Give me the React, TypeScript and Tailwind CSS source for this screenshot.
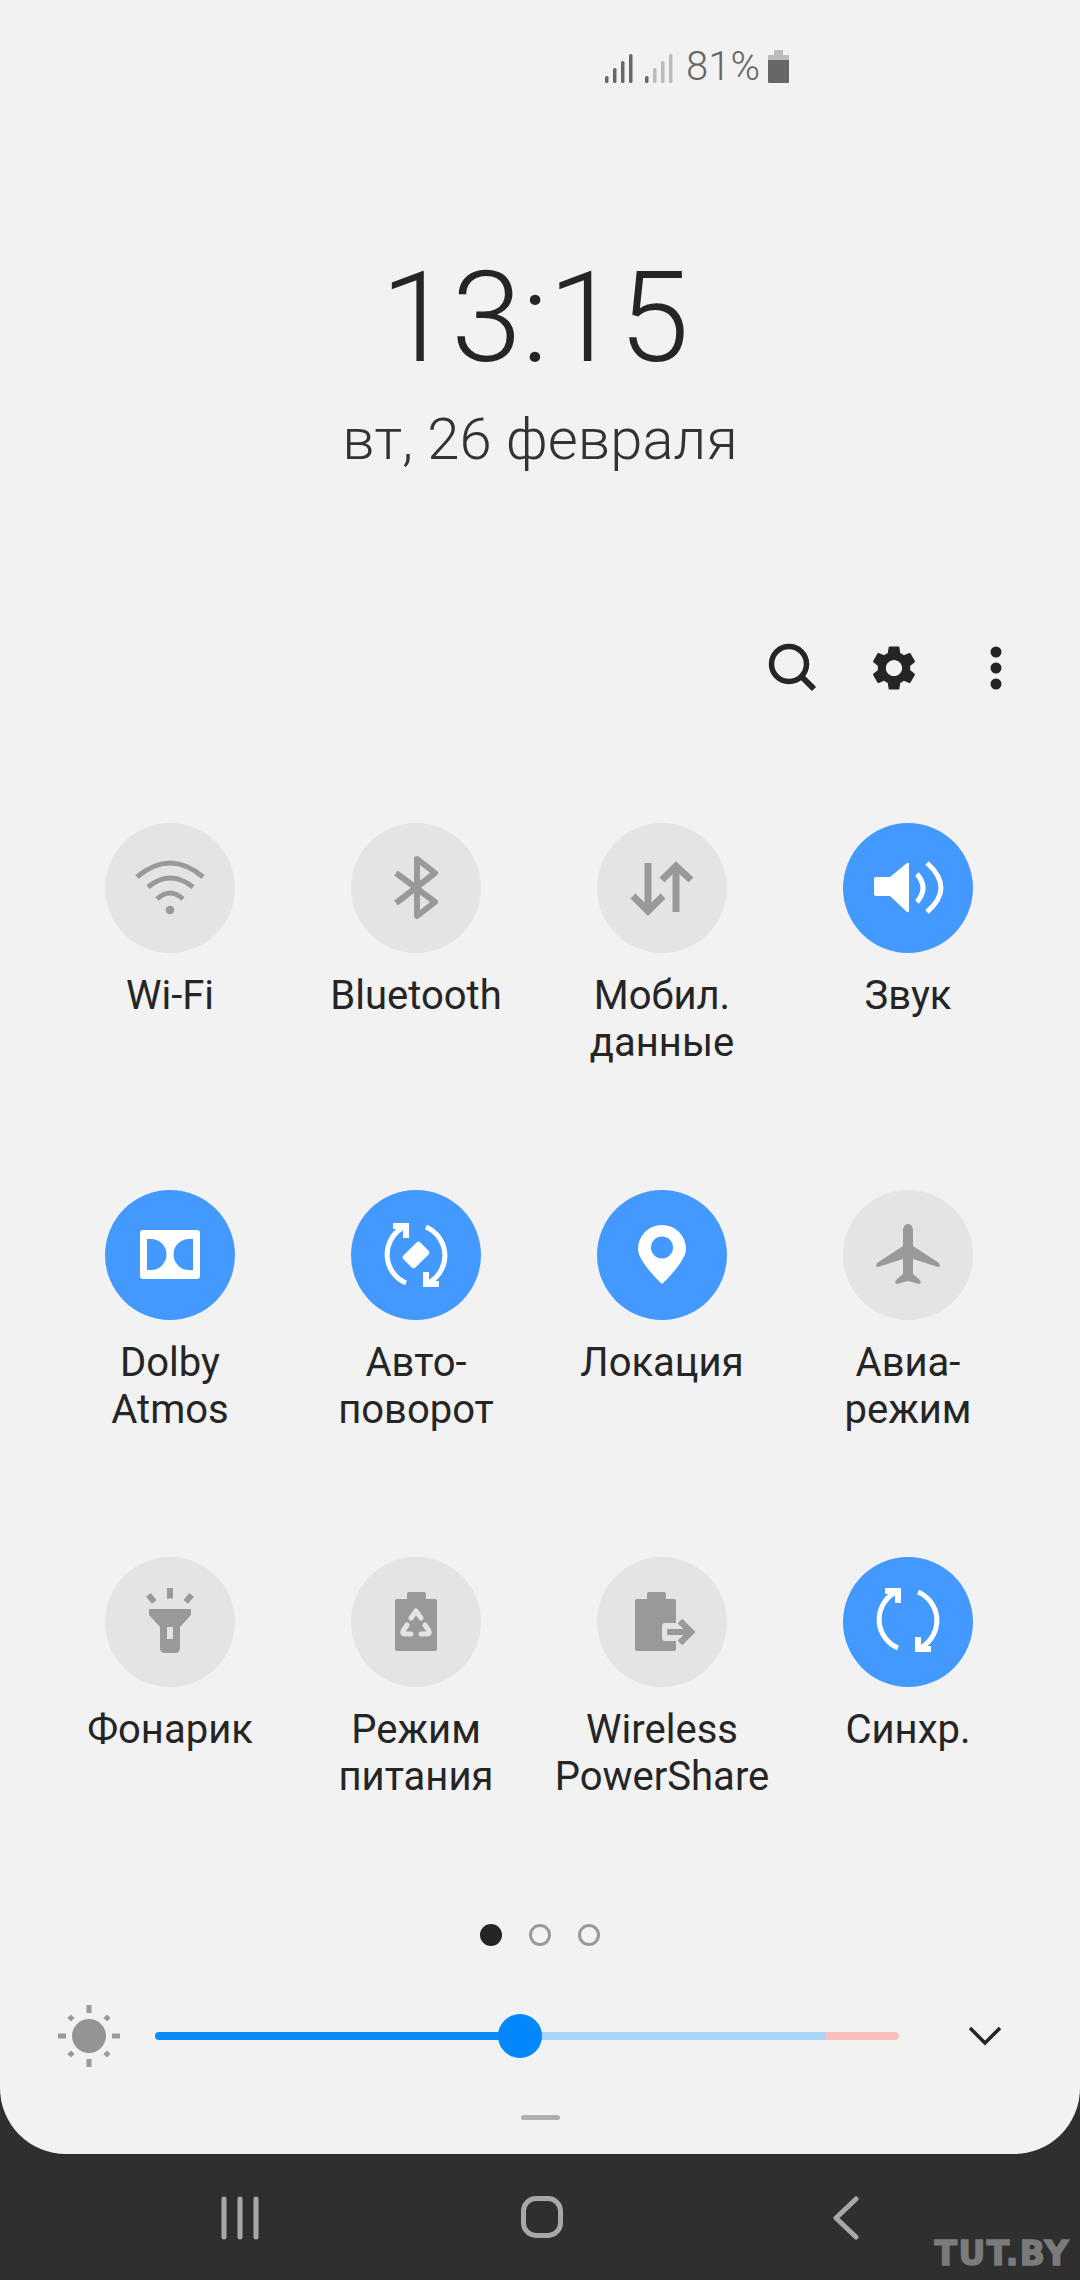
const font = { fontFamily: "Roboto, sans-serif" };

const WifiIcon = () => (
    <g fill="none" stroke="currentColor" strokeWidth="5">
        <path d="M32 54 Q65 26 98 54" />
        <path d="M43 64 Q65 46 88 64" />
        <path d="M52 76 Q65 64 78 76" />
        <circle cx="65" cy="87" r="4.3" fill="currentColor" stroke="none" />
    </g>
);

const BluetoothIcon = () => (
    <path d="M45 50 L84 79 L66 93 V36 L84 50 L45 80" fill="none" stroke="currentColor" strokeWidth="6" strokeLinejoin="round" />
);

const DataIcon = () => (
    <g fill="none" stroke="currentColor" strokeWidth="7">
        <path d="M51 40 V86" />
        <path d="M36 73 L51 88 L66 73" />
        <path d="M79 89 V44" />
        <path d="M65 57 L79 43 L94 57" />
    </g>
);

const SoundIcon = () => (
    <g>
        <path d="M33 54 H47 L64 40 Q66 39 66 41 V88 Q66 90 64 89 L47 73 H33 Q31 73 31 71 V56 Q31 54 33 54Z" fill="currentColor" />
        <path d="M74 51 Q86 65 74 79" fill="none" stroke="currentColor" strokeWidth="5" />
        <path d="M84 40 Q112 65 84 89" fill="none" stroke="currentColor" strokeWidth="5" />
    </g>
);

const DolbyIcon = () => (
    <g>
        <rect x="35" y="40" width="60" height="49" rx="3" fill="currentColor" />
        <path d="M42 49 H46 A15.5 15.5 0 0 1 46 80 H42Z" className="fill-[#4499ff]" />
        <path d="M88 49 H84 A15.5 15.5 0 0 0 84 80 H88Z" className="fill-[#4499ff]" />
    </g>
);

const SyncArcs = ({ dy = 0 }: { dy?: number }) => (
    <g fill="none" stroke="currentColor" strokeWidth="5" transform={`translate(0 ${dy})`}>
        <path d="M55 93 A31 31 0 0 1 51 38" />
        <path d="M42 36 H55 V48" strokeWidth="6" />
        <path d="M75 37 A31 31 0 0 1 79 92" />
        <path d="M88 94 H75 V82" strokeWidth="6" />
    </g>
);

const RotateIcon = () => (
    <g>
        <SyncArcs />
        <rect x="53" y="56.5" width="24" height="17" rx="3" fill="currentColor" transform="rotate(-45 65 65)" />
    </g>
);

const PinIcon = () => (
    <g>
        <path d="M65 94 C65 94 41 72 41 59 A24 24 0 0 1 89 59 C89 72 65 94 65 94Z" fill="currentColor" />
        <circle cx="65" cy="57.5" r="11" className="fill-[#4499ff]" />
    </g>
);

const PlaneIcon = () => (
    <path
        d="M65 34 C60 34 60 40 60 42 V56 L34 73 C33 75 33 77 35 77 L60 69 V84 L53 90 C52 92 52 94 54 94 L65 91 L76 94 C78 94 78 92 77 90 L70 84 V69 L95 77 C97 77 97 75 96 73 L70 56 V42 C70 40 70 34 65 34Z"
        fill="currentColor"
    />
);

const FlashlightIcon = () => (
    <g fill="currentColor">
        <rect x="62" y="31" width="6" height="10.5" />
        <rect x="43" y="37" width="6" height="9" transform="rotate(-40 46 41)" />
        <rect x="81" y="37" width="6" height="9" transform="rotate(40 84 41)" />
        <path
            d="M44 52 H86 V58 L75 70 V91 Q75 96 70 96 H60 Q55 96 55 91 V70 L44 58Z M62 70 V82 H68 V70Z"
            fillRule="evenodd"
        />
    </g>
);

const RecycleIcon = () => (
    <g>
        <rect x="44" y="42" width="42" height="52" rx="2" fill="currentColor" />
        <rect x="56" y="35" width="19" height="8" rx="2" fill="currentColor" />
        <g fill="none" stroke="#e4e4e4" strokeWidth="5" strokeLinecap="round" strokeLinejoin="round">
            <path d="M60 61 L65 54 L70 61" />
            <path d="M56 68 L52 74 Q51 77 54 77 H60" />
            <path d="M74 68 L78 74 Q79 77 76 77 H70" />
        </g>
    </g>
);

const PowerShareIcon = () => (
    <g>
        <rect x="38" y="42" width="41" height="52" rx="2" fill="currentColor" />
        <rect x="50" y="35" width="19" height="8" rx="2" fill="currentColor" />
        <rect x="65" y="66" width="20" height="18" rx="3" fill="#e4e4e4" />
        <path d="M70 75 H94" fill="none" stroke="currentColor" strokeWidth="6" />
        <path d="M83 64 L94 75 L83 86" fill="none" stroke="currentColor" strokeWidth="6.5" />
    </g>
);

const tiles = [
    { label: "Wi-Fi", icon: WifiIcon },
    { label: "Bluetooth", icon: BluetoothIcon },
    { label: "Мобил.\nданные", icon: DataIcon },
    { label: "Звук", icon: SoundIcon, on: true },
    { label: "Dolby\nAtmos", icon: DolbyIcon, on: true },
    { label: "Авто-\nповорот", icon: RotateIcon, on: true },
    { label: "Локация", icon: PinIcon, on: true },
    { label: "Авиа-\nрежим", icon: PlaneIcon },
    { label: "Фонарик", icon: FlashlightIcon },
    { label: "Режим\nпитания", icon: RecycleIcon },
    { label: "Wireless\nPowerShare", icon: PowerShareIcon },
    { label: "Синхр.", icon: () => <SyncArcs dy={-2} />, on: true },
];

const Bars = ({ dim }: { dim: boolean }) => (
    <svg width="30" height="34" viewBox="0 0 30 34">
        {[26, 18, 11, 4].map((y, i) => (
            <rect
                key={y}
                x={i * 8 + 1}
                y={y}
                width="3.5"
                height={33 - y}
                rx="1.5"
                fill={dim && i > 0 ? "#bbbbbb" : "#666666"}
            />
        ))}
    </svg>
);

const Sun = () => (
    <svg width="62" height="62" viewBox="0 0 62 62" fill="#999999">
        <circle cx="31" cy="31" r="17" fill="#949494" />
        <rect x="28.5" y="0" width="5" height="8" />
        <rect x="28.5" y="54" width="5" height="8" />
        <rect x="0" y="28.5" width="8" height="5" />
        <rect x="54" y="28.5" width="8" height="5" />
        <rect x="10.5" y="10.5" width="5" height="5" transform="rotate(45 13 13)" />
        <rect x="46.5" y="10.5" width="5" height="5" transform="rotate(45 49 13)" />
        <rect x="10.5" y="46.5" width="5" height="5" transform="rotate(45 13 49)" />
        <rect x="46.5" y="46.5" width="5" height="5" transform="rotate(45 49 49)" />
    </svg>
);

export default function App() {
    return (
        <div className="relative h-[2280px] w-[1080px] overflow-hidden bg-[#2f2f2f]" style={font}>
            <div className="flex h-[2154px] flex-col rounded-b-[66px] bg-[#f2f2f2]">
                <div className="flex h-[96px] items-start justify-end pr-[290px] pt-[48px]">
                    <div className="flex items-center">
                        <Bars dim={false} />
                        <div className="ml-[10px]"><Bars dim /></div>
                        <span className="ml-[12px] text-[40px] leading-[38px] font-light text-[#666666]">81%</span>
                        <svg className="ml-[8px]" width="22" height="34" viewBox="0 0 22 34">
                            <path d="M6 0 H15 V5 H21 V11 H0 V5 H6Z" fill="#bbbbbb" />
                            <path d="M0 10 H21 V32 Q21 33 20 33 H1 Q0 33 0 32Z" fill="#666666" />
                        </svg>
                    </div>
                </div>

                <div className="mt-[147px] pr-[10px] text-center text-[127px] leading-[150px] font-light text-[#252525]">13:15</div>
                <div className="mt-[16px] text-center text-[58px] leading-[60px] font-light text-[#333333]">вт, 26 февраля</div>

                <div className="mt-[169px] flex h-[60px] items-center justify-end gap-[40px] pr-[54px] text-[#252525]">
                    <svg width="60" height="60" viewBox="0 0 60 60" fill="none" stroke="currentColor">
                        <circle cx="23" cy="26" r="17.5" strokeWidth="5.5" />
                        <path d="M36 39 L48 51" strokeWidth="6" />
                    </svg>
                    <svg width="54" height="54" viewBox="0 0 24 24" fill="currentColor" className="mx-[3px] -translate-x-[2px]">
                        <path d="M19.14 12.94c.04-.3.06-.61.06-.94 0-.32-.02-.64-.07-.94l2.03-1.58c.18-.14.23-.41.12-.61l-1.92-3.32c-.12-.22-.37-.29-.59-.22l-2.39.96c-.5-.38-1.03-.7-1.62-.94l-.36-2.54c-.04-.24-.24-.41-.48-.41h-3.84c-.24 0-.43.17-.47.41l-.36 2.54c-.59.24-1.13.57-1.62.94l-2.39-.96c-.22-.08-.47 0-.59.22L2.74 8.87c-.12.21-.08.47.12.61l2.03 1.58c-.05.3-.09.63-.09.94s.02.64.07.94l-2.03 1.58c-.18.14-.23.41-.12.61l1.92 3.32c.12.22.37.29.59.22l2.39-.96c.5.38 1.03.7 1.62.94l.36 2.54c.05.24.24.41.48.41h3.84c.24 0 .44-.17.47-.41l.36-2.54c.59-.24 1.13-.56 1.62-.94l2.39.96c.22.08.47 0 .59-.22l1.92-3.32c.12-.22.07-.47-.12-.61l-2.01-1.58zM12 15.6c-1.98 0-3.6-1.62-3.6-3.6s1.62-3.6 3.6-3.6 3.6 1.62 3.6 3.6-1.62 3.6-3.6 3.6z" />
                    </svg>
                    <svg width="60" height="60" viewBox="0 0 60 60" fill="currentColor">
                        <circle cx="30" cy="14" r="5.5" />
                        <circle cx="30" cy="30" r="5.5" />
                        <circle cx="30" cy="46" r="5.5" />
                    </svg>
                </div>

                <div className="mt-[125px] grid grid-cols-4 auto-rows-[367px] pl-[47px] pr-[49px]">
                    {tiles.map(tile => (
                        <div key={tile.label} className="flex flex-col items-center">
                            <div
                                className={
                                    tile.on
                                        ? "size-[130px] rounded-full bg-[#4499ff] text-white"
                                        : "size-[130px] rounded-full bg-[#e4e4e4] text-[#999999]"
                                }
                            >
                                <svg width="130" height="130" viewBox="0 0 130 130">
                                    <tile.icon />
                                </svg>
                            </div>
                            <div className="mt-[19px] whitespace-pre-line text-center text-[40px] leading-[47px] text-[#252525]">
                                {tile.label}
                            </div>
                        </div>
                    ))}
                </div>

                <div className="flex h-[22px] items-center justify-center gap-[27px]">
                    <div className="size-[22px] rounded-full bg-[#252525]" />
                    <div className="size-[22px] rounded-full border-[3px] border-[#999999]" />
                    <div className="size-[22px] rounded-full border-[3px] border-[#999999]" />
                </div>

                <div className="mt-[68px] flex h-[44px] items-center pl-[58px]">
                    <Sun />
                    <div className="relative ml-[35px] flex h-[8px] w-[744px] overflow-visible">
                        <div className="w-[365px] rounded-l-full bg-[#0a8cf7]" />
                        <div className="w-[306px] bg-[#a9d4f7]" />
                        <div className="w-[73px] rounded-r-full bg-[#f7c0bd]" />
                        <div className="absolute left-[343px] top-[-18px] size-[44px] rounded-full bg-[#0288fb]" />
                    </div>
                    <svg className="ml-[69px]" width="34" height="20" viewBox="0 0 34 20" fill="none" stroke="#252525" strokeWidth="3.5">
                        <path d="M2 2 L17 17 L32 2" />
                    </svg>
                </div>

                <div className="mt-[57px] flex justify-center">
                    <div className="h-[5px] w-[39px] rounded-full bg-[#b0b0b0]" />
                </div>
            </div>

            <div className="flex h-[126px] items-start pt-[42px]">
                <svg className="ml-[220px]" width="40" height="44" viewBox="0 0 40 44" stroke="#a8a8a8" strokeWidth="5" strokeLinecap="round">
                    <path d="M4 3 V41 M20 3 V41 M36 3 V41" />
                </svg>
                <div className="ml-[261px] h-[42px] w-[42px] rounded-[15px] border-[5px] border-[#a8a8a8]" />
                <svg className="ml-[270px]" width="26" height="44" viewBox="0 0 26 44" fill="none" stroke="#a8a8a8" strokeWidth="5" strokeLinecap="round" strokeLinejoin="round">
                    <path d="M23 3 L3 22 L23 41" />
                </svg>
            </div>

            <div className="absolute bottom-[10px] right-[10px] text-[33px] leading-[33px] font-bold tracking-[1.5px] text-[#7b7b7b] [-webkit-text-stroke:1.5px_#7b7b7b]" style={{ fontFamily: "'DejaVu Sans', sans-serif" }}>
                TUT.BY
            </div>
        </div>
    );
}
